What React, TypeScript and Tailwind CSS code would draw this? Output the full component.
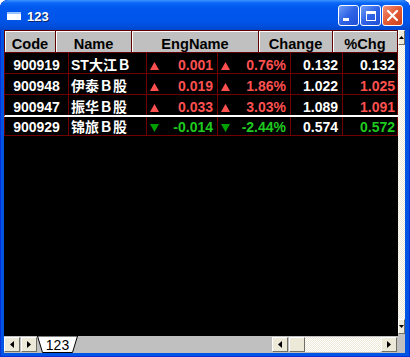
import React from 'react';

type Tone = 'white' | 'red' | 'green';
type Row = { code: string; name: string; chg: string; pct: string; price: string; last: string; up: boolean; lastTone: Tone; h: string; line: string };

const ROWS: Row[] = [
    { code: '900919', name: 'ST大江Ｂ', chg: '0.001', pct: '0.76%', price: '0.132', last: '0.132', up: true, lastTone: 'white', h: 'h-[21px]', line: 'border-b border-[#700000]' },
    { code: '900948', name: '伊泰Ｂ股', chg: '0.019', pct: '1.86%', price: '1.022', last: '1.025', up: true, lastTone: 'red', h: 'h-[21px]', line: 'border-b border-[#700000]' },
    { code: '900947', name: '振华Ｂ股', chg: '0.033', pct: '3.03%', price: '1.089', last: '1.091', up: true, lastTone: 'red', h: 'h-[22px]', line: 'border-b-2 border-white' },
    { code: '900929', name: '锦旅Ｂ股', chg: '-0.014', pct: '-2.44%', price: '0.574', last: '0.572', up: false, lastTone: 'green', h: 'h-[19px]', line: 'border-b border-[#700000]' },
];

const TONE: Record<Tone, string> = { white: 'text-white', red: 'text-[#ff5050]', green: 'text-[#1ecb1e]' };

const CELL = "h-full flex items-end leading-[16px] border-r border-[#700000] shrink-0";
const HEAD = "h-full flex items-end justify-center leading-[16px] border-r border-[#600000] shrink-0 shadow-[inset_1px_1px_0_#ffffff]";
const BTN = "h-[15px] flex items-center justify-center bg-[#ece9d8] border border-t-white border-l-white border-r-[#716f64] border-b-[#716f64] shrink-0";
const DITHER = "bg-[repeating-conic-gradient(#ece9d8_0%_25%,#ffffff_0%_50%)] bg-size-[2px_2px]";

function Tri({ up }: { up: boolean }) {
    return up ? (
        <svg width="9" height="8" viewBox="0 0 9 8" className="shrink-0 mb-[3px]"><path d="M4.5 0L9 8H0Z" fill="#ff5050" /></svg>
    ) : (
        <svg width="9" height="8" viewBox="0 0 9 8" className="shrink-0 mb-[3px]"><path d="M0 0H9L4.5 8Z" fill="#00a000" /></svg>
    );
}

function Arrow({ dir }: { dir: 'l' | 'r' | 'u' | 'd' }) {
    const d = { l: 'M4 0V7L0 3.5Z', r: 'M0 0V7L4 3.5Z', u: 'M0 3H5L2.5 0Z', d: 'M0 0H5L2.5 3Z' }[dir];
    const small = dir === 'u' || dir === 'd';
    return <svg width={small ? 5 : 4} height={small ? 3 : 7} viewBox={small ? '0 0 5 3' : '0 0 4 7'}><path d={d} fill="#000" /></svg>;
}

export default function App() {
    return (
        <div className="w-[410px] h-[357px] bg-white font-['Liberation_Sans','Noto_Sans_CJK_SC',sans-serif]">
            <div className="w-full h-full flex flex-col rounded-t-[8px] bg-[#0054e3] shadow-[inset_0_0_0_1px_#0831d9] pl-[4px] pr-[5px] pb-[4px] overflow-hidden">
                {/* title bar */}
                <div className="h-[30px] -mx-[4px] -mr-[5px] px-[7px] flex items-center shrink-0 rounded-t-[8px] bg-[linear-gradient(to_bottom,#3d95ff_0px,#0a66f6_3px,#0058ee_8px,#0055ea_20px,#004fdc_26px,#0046cc_30px)]">
                    <div className="w-[14px] h-[8px] bg-white border-t-2 border-[#9cc4ff] mt-[1px]" />
                    <span className="ml-[6px] pt-[3px] text-white font-bold text-[13px] [text-shadow:1px_1px_0_#0a246a]">123</span>
                    <div className="ml-auto flex gap-[1px] pt-[1px]">
                        <div className="w-[21px] h-[21px] rounded-[3px] border border-white bg-[linear-gradient(135deg,#6f9cf7,#2f63e6_50%,#1d4fd6)] relative">
                            <div className="absolute left-[4px] bottom-[4px] w-[6px] h-[3px] bg-white" />
                        </div>
                        <div className="w-[21px] h-[21px] rounded-[3px] border border-white bg-[linear-gradient(135deg,#6f9cf7,#2f63e6_50%,#1d4fd6)] flex items-center justify-center">
                            <div className="w-[10px] h-[10px] border border-white border-t-[3px]" />
                        </div>
                        <div className="w-[21px] h-[21px] rounded-[3px] border border-white bg-[linear-gradient(135deg,#f2927a,#e35a34_50%,#c9401a)] flex items-center justify-center">
                            <svg width="11" height="11" viewBox="0 0 11 11"><path d="M1 1L10 10M10 1L1 10" stroke="#fff" strokeWidth="2.2" strokeLinecap="square" /></svg>
                        </div>
                    </div>
                </div>

                {/* grid + vertical scrollbar */}
                <div className="h-[304px] flex shrink-0">
                    <div className="flex-1 bg-black font-bold">
                        <div className="h-[23px] flex border-y border-l border-[#600000] bg-[#c0c0c0] text-black text-[14.6px]">
                            <div className={`${HEAD} w-[51px]`}>Code</div>
                            <div className={`${HEAD} w-[76px]`}>Name</div>
                            <div className={`${HEAD} w-[127px]`}>EngName</div>
                            <div className={`${HEAD} w-[74px]`}>Change</div>
                            <div className={`${HEAD} w-[65px]`}>%Chg</div>
                        </div>
                        {ROWS.map(r => (
                            <div key={r.code} className={`${r.h} ${r.line} flex border-l border-l-[#700000] text-[14px]`}>
                                <div className={`${CELL} w-[64px] justify-center text-white`}>{r.code}</div>
                                <div className={`${CELL} w-[78px] pl-[2px] text-white`}>{r.name}</div>
                                <div className={`${CELL} w-[71px] justify-between pl-[3px] pr-[4px] ${r.up ? TONE.red : TONE.green}`}><Tri up={r.up} />{r.chg}</div>
                                <div className={`${CELL} w-[73px] justify-between pl-[3px] pr-[4px] ${r.up ? TONE.red : TONE.green}`}><Tri up={r.up} />{r.pct}</div>
                                <div className={`${CELL} w-[52px] justify-end pr-[4px] text-white`}>{r.price}</div>
                                <div className={`${CELL} w-[55px] justify-end pr-[2px] ${TONE[r.lastTone]}`}>{r.last}</div>
                            </div>
                        ))}
                    </div>
                    <div className="w-[7px] flex flex-col">
                        <div className={`${BTN} w-[7px]`}><Arrow dir="u" /></div>
                        <div className={`flex-1 ${DITHER}`} />
                        <div className={`${BTN} w-[7px]`}><Arrow dir="d" /></div>
                    </div>
                </div>

                {/* sheet tabs + horizontal scrollbar */}
                <div className="flex-1 flex">
                    <div className="flex-1 flex flex-col">
                        <div className="h-[2px] bg-black" />
                        <div className="flex-1 flex items-start pt-[1px] bg-[#c0c0c0]">
                            <div className={`${BTN} w-[16px]`}><Arrow dir="l" /></div>
                            <div className={`${BTN} w-[16px] ml-[1px]`}><Arrow dir="r" /></div>
                            <div className="relative w-[41px] h-[16px] -mt-[1px] shrink-0 flex items-center justify-center">
                                <svg width="41" height="17" viewBox="0 0 41 17" className="absolute inset-0"><path d="M0.5 0L5.5 16.5H35.5L40.5 0Z" fill="#fff" stroke="#000" strokeWidth="1" /></svg>
                                <span className="relative text-[14px] leading-[16px] text-black pt-[1px]">123</span>
                            </div>
                            <div className="flex-1" />
                            <div className={`${BTN} w-[16px]`}><Arrow dir="l" /></div>
                            <div className={`${BTN} w-[16px] ml-[1px]`} />
                            <div className={`w-[76px] h-[15px] ${DITHER}`} />
                            <div className={`${BTN} w-[16px]`}><Arrow dir="r" /></div>
                            <div className="w-[1px]" />
                        </div>
                    </div>
                    <div className="w-[7px] bg-[#c0c0c0]" />
                </div>
            </div>
        </div>
    );
}
